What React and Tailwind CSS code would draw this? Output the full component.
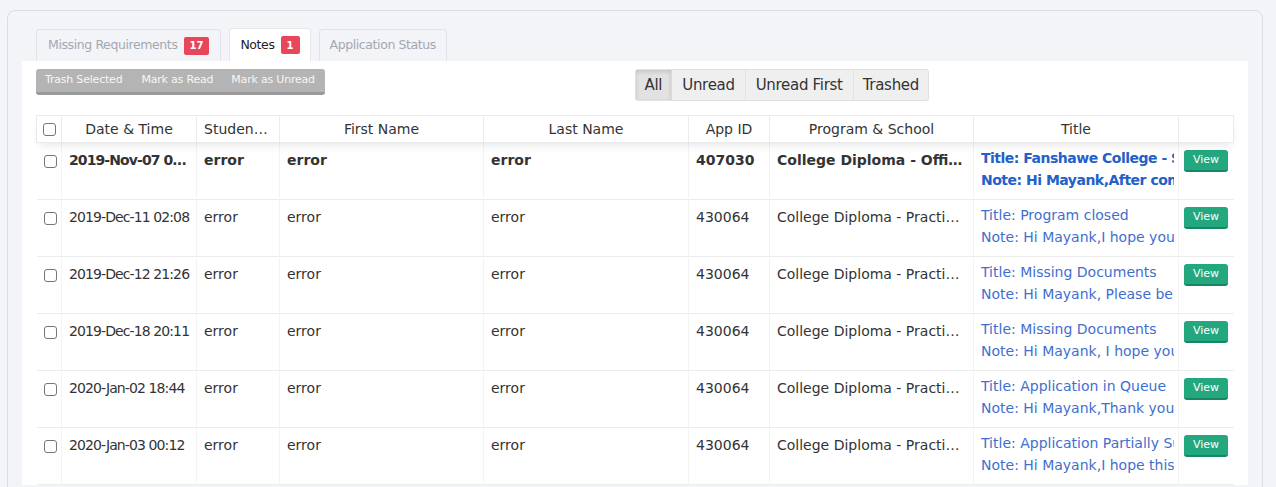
import React from 'react';

const rows = [
  { date: '2019-Nov-07 02:41', id: '407030', prog: 'College Diploma - Office Administration', title: 'Title: Fanshawe College - Student Visa', note: 'Note: Hi Mayank,After completing', bold: true },
  { date: '2019-Dec-11 02:08', id: '430064', prog: 'College Diploma - Practical Nursing', title: 'Title: Program closed', note: 'Note: Hi Mayank,I hope you are well' },
  { date: '2019-Dec-12 21:26', id: '430064', prog: 'College Diploma - Practical Nursing', title: 'Title: Missing Documents', note: 'Note: Hi Mayank, Please be advised' },
  { date: '2019-Dec-18 20:11', id: '430064', prog: 'College Diploma - Practical Nursing', title: 'Title: Missing Documents', note: 'Note: Hi Mayank, I hope you are well' },
  { date: '2020-Jan-02 18:44', id: '430064', prog: 'College Diploma - Practical Nursing', title: 'Title: Application in Queue', note: 'Note: Hi Mayank,Thank you for' },
  { date: '2020-Jan-03 00:12', id: '430064', prog: 'College Diploma - Practical Nursing', title: 'Title: Application Partially Submitted', note: 'Note: Hi Mayank,I hope this finds you' },
];

const font = { fontFamily: '"DejaVu Sans", "Liberation Sans", sans-serif' };

function Box() {
  return <span className="inline-block w-[13px] h-[13px] rounded-[3px] border border-[#767676] bg-white align-middle" />;
}

export default function App() {
  return (
    <div className="bg-[#f3f4f7] min-h-screen pt-[10px] pl-[7px] pr-[13px]" style={font}>
      <div className="border border-[#dcdde2] rounded-t-[8px] bg-[#f3f4f7] pt-[17px] pl-[14px] pr-[14px] h-[490px]">
        <div className="flex pl-[14px] gap-[8px] h-[33px] items-end">
          <div className="h-[32px] border border-b-0 border-[#e1e2e7] rounded-t-[4px] px-[11px] flex items-center gap-[6px] text-[12.5px] text-[#a3a7b2] tracking-[-0.4px]">
            Missing Requirements
            <span className="bg-[#e8475b] text-white text-[10px] font-bold rounded-[2px] px-[6px] h-[18px] flex items-center tracking-normal">17</span>
          </div>
          <div className="h-[33px] bg-white border border-b-0 border-[#e6e7eb] rounded-t-[4px] px-[10px] flex items-center gap-[6px] text-[12.5px] text-[#222] tracking-[-0.4px]">
            Notes
            <span className="bg-[#e8475b] text-white text-[10px] font-bold rounded-[2px] px-[6px] h-[18px] flex items-center tracking-normal">1</span>
          </div>
          <div className="h-[32px] border border-b-0 border-[#e1e2e7] rounded-t-[4px] px-[10px] flex items-center text-[12.5px] text-[#a3a7b2] tracking-[-0.4px]">
            Application Status
          </div>
        </div>
        <div className="bg-white pt-[8px] px-[14px]">
          <div className="flex items-start justify-between h-[47px]">
            <div className="flex bg-[#b4b4b4] rounded-[3px] border-b-[3px] border-[#9a9a9a] h-[26px] items-center text-[11px] text-[#f6f6f6] tracking-[-0.2px]">
              <span className="pl-[9px] pr-[10px]">Trash Selected</span>
              <span className="px-[9px]">Mark as Read</span>
              <span className="pl-[9px] pr-[10px]">Mark as Unread</span>
            </div>
            <div className="flex h-[32px] mr-[305px] border border-[#e0e0e0] bg-[#efefef] rounded-[3px] text-[15px] text-[#333] tracking-[-0.3px]">
              <span className="px-[9px] flex items-center bg-[#e2e2e2] shadow-[inset_0_2px_4px_rgba(0,0,0,0.13)] border-r border-[#dadada]">All</span>
              <span className="px-[10px] flex items-center border-r border-[#e2e2e2]">Unread</span>
              <span className="px-[10px] flex items-center border-r border-[#e2e2e2]">Unread First</span>
              <span className="px-[9px] flex items-center">Trashed</span>
            </div>
          </div>
          <table className="table-fixed border-collapse w-[1197px] text-[14px] text-[#333] -mt-[1px]">
            <colgroup>
              <col className="w-[25px]" />
              <col className="w-[135px]" />
              <col className="w-[83px]" />
              <col className="w-[204px]" />
              <col className="w-[205px]" />
              <col className="w-[81px]" />
              <col className="w-[204px]" />
              <col className="w-[205px]" />
              <col className="w-[55px]" />
            </colgroup>
            <thead>
              <tr className="h-[27px] shadow-[0_5px_10px_-3px_rgba(0,0,0,0.1)] relative">
                <th className="border border-[#ebebeb] text-center font-normal"><Box /></th>
                {['Date & Time', 'Student ID', 'First Name', 'Last Name', 'App ID', 'Program & School', 'Title', ''].map((h, i) => (
                  <th key={i} className="border border-[#ebebeb] font-normal text-center px-[7px] truncate">{h}</th>
                ))}
              </tr>
            </thead>
            <tbody>
              {rows.map((r, i) => {
                const w = r.bold ? 'font-bold' : '';
                return (
                  <tr key={i} className="h-[57px] border-b border-[#ebebeb]">
                    <td className="border-r border-[#f3f3f3] align-top pt-[7px] pl-[7px]"><Box /></td>
                    <td className={`border-r border-[#f3f3f3] align-top pt-[7px] pl-[7px] pr-[2px] truncate tracking-[-0.9px] ${w}`}>{r.date}</td>
                    <td className={`border-r border-[#f3f3f3] align-top pt-[7px] px-[7px] truncate ${w}`}>error</td>
                    <td className={`border-r border-[#f3f3f3] align-top pt-[7px] px-[7px] truncate ${w}`}>error</td>
                    <td className={`border-r border-[#f3f3f3] align-top pt-[7px] px-[7px] truncate ${w}`}>error</td>
                    <td className={`border-r border-[#f3f3f3] align-top pt-[7px] px-[7px] truncate ${w}`}>{r.id}</td>
                    <td className={`border-r border-[#f3f3f3] align-top pt-[7px] px-[7px] truncate ${w}`}>{r.prog}</td>
                    <td className={`border-r border-[#f3f3f3] align-top pt-[4px] pl-[7px] pr-[4px] overflow-hidden whitespace-nowrap leading-[22px] ${r.bold ? 'font-bold text-[#2360c8] tracking-[-0.5px]' : 'text-[#3f6fce]'}`}>
                      <div className="overflow-hidden">{r.title}</div>
                      <div className="overflow-hidden">{r.note}</div>
                    </td>
                    <td className="align-top pt-[5px] pl-[5px]">
                      <span className="inline-flex items-center justify-center w-[44px] h-[22px] rounded-[3px] bg-[#22a77e] border-b-2 border-[#178763] text-white text-[11px]">View</span>
                    </td>
                  </tr>
                );
              })}
            </tbody>
          </table>
        </div>
      </div>
    </div>
  );
}
